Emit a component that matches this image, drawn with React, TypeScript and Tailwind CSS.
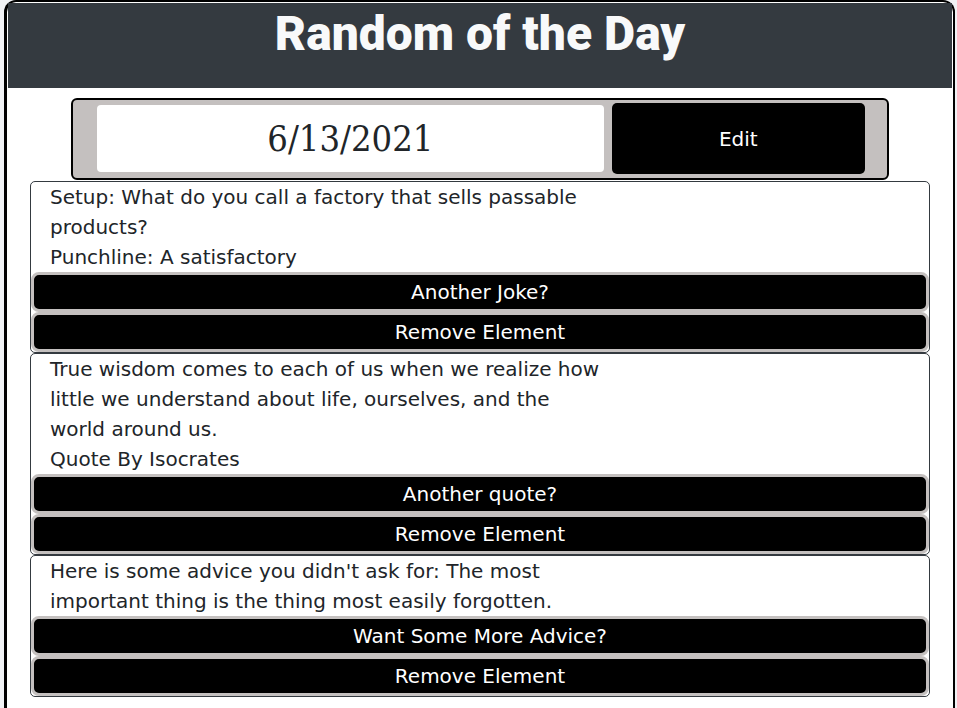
import { useState } from "react";

type Entry = {
  id: string;
  lines: string[];
  action: string;
};

const entries: Entry[] = [
  {
    id: "joke",
    lines: [
      "Setup: What do you call a factory that sells passable products?",
      "Punchline: A satisfactory",
    ],
    action: "Another Joke?",
  },
  {
    id: "quote",
    lines: [
      "True wisdom comes to each of us when we realize how little we understand about life, ourselves, and the world around us.",
      "Quote By Isocrates",
    ],
    action: "Another quote?",
  },
  {
    id: "advice",
    lines: [
      "Here is some advice you didn't ask for: The most important thing is the thing most easily forgotten.",
    ],
    action: "Want Some More Advice?",
  },
];

function BarButton({ label, onClick }: { label: string; onClick?: () => void }) {
  return (
    <button
      type="button"
      onClick={onClick}
      className="block h-10 w-full rounded-lg border-3 border-[#c4c0bf] bg-black text-center text-white"
    >
      {label}
    </button>
  );
}

function EntryCard({ entry, onRemove }: { entry: Entry; onRemove: () => void }) {
  return (
    <section className="rounded-[5px] border border-[#343a40]">
      <div className="w-2/3 pr-5 pl-[19px] text-[#212529]">
        {entry.lines.map((line) => (
          <p key={line}>{line}</p>
        ))}
      </div>
      <BarButton label={entry.action} />
      <BarButton label="Remove Element" onClick={onRemove} />
    </section>
  );
}

export default function App() {
  const [visible, setVisible] = useState(entries);

  return (
    <div className="min-h-screen bg-[#f1f2f5] pr-0.5 pl-1 font-['DejaVu_Sans',Verdana,sans-serif] text-[20px] leading-[30px]">
      <main className="min-h-screen rounded-t-xl border-t-2 border-r-2 border-l-3 border-black bg-white px-px pt-px">
        <header className="h-[85px] bg-[#343a40] text-center">
          <h1 className="pt-1 font-[Roboto,Arial,sans-serif] text-[48px] leading-[54px] font-black text-[#f8f9fa]">
            Random of the Day
          </h1>
        </header>
        <div className="mx-[63px] mt-2.5 grid h-[82px] grid-cols-[2fr_1fr] items-center gap-2 rounded-md border-2 border-black bg-[#c4c0bf] pr-[22px] pb-0.5 pl-6">
          <div className="flex h-[67px] items-center justify-center rounded-sm bg-white pt-0.5 font-['DejaVu_Serif_Condensed','DejaVu_Serif',Cambria,serif] text-[36px] text-[#212529]">
            6/13/2021
          </div>
          <button type="button" className="h-[71px] rounded-[5px] bg-black pt-0.5 text-white">
            Edit
          </button>
        </div>
        <div className="mx-[22px] mt-px">
          {visible.map((entry) => (
            <EntryCard
              key={entry.id}
              entry={entry}
              onRemove={() => setVisible(visible.filter((item) => item.id !== entry.id))}
            />
          ))}
        </div>
      </main>
    </div>
  );
}
